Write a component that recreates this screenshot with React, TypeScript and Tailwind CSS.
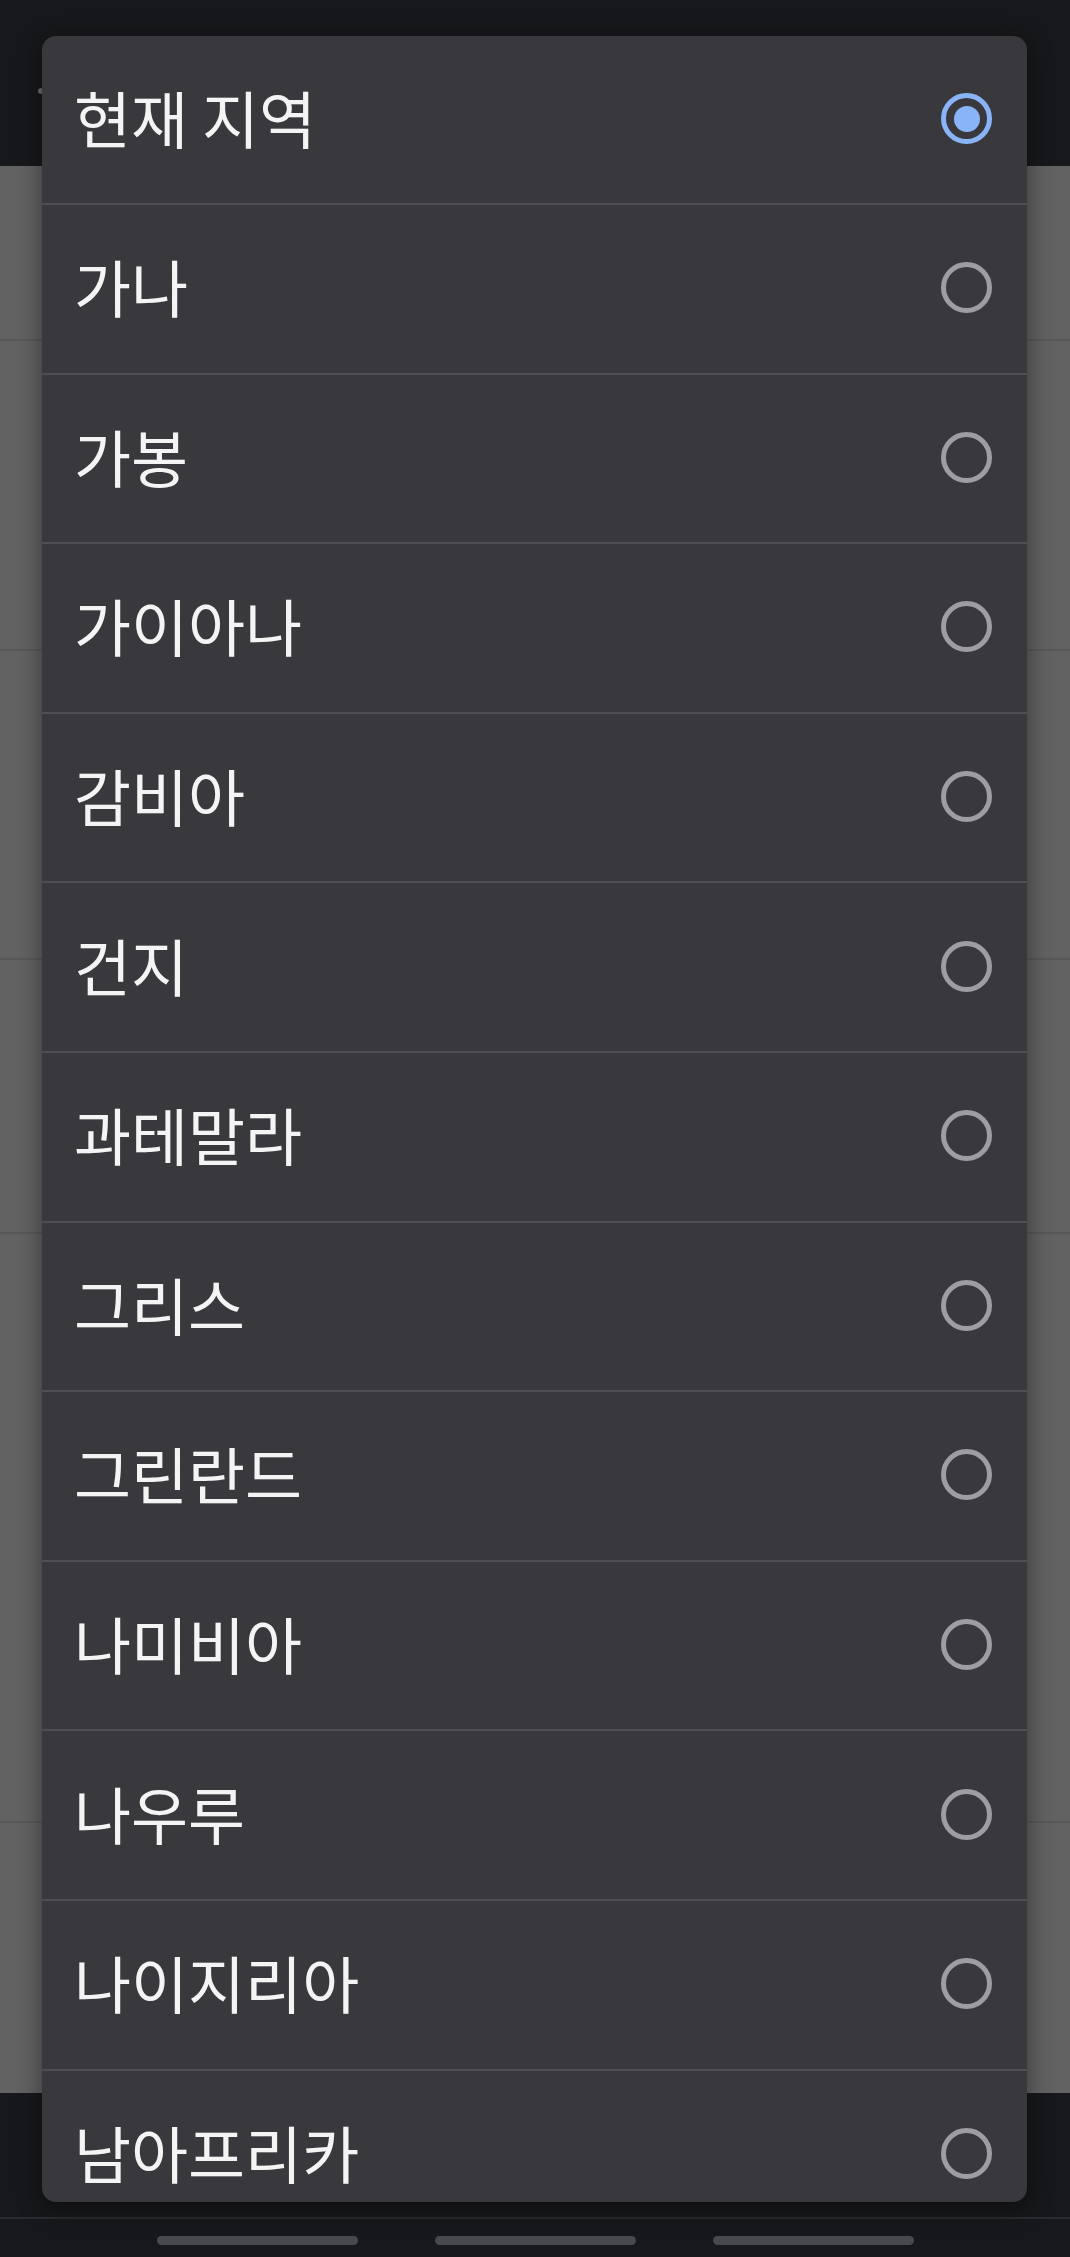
import React from "react";

const regions = [
  "현재 지역",
  "가나",
  "가봉",
  "가이아나",
  "감비아",
  "건지",
  "과테말라",
  "그리스",
  "그린란드",
  "나미비아",
  "나우루",
  "나이지리아",
  "남아프리카",
];

function Radio({ checked }: { checked: boolean }) {
  if (checked) {
    return (
      <span className="flex size-[51px] items-center justify-center rounded-full border-[5px] border-[#8ab4f8]">
        <span className="size-[26px] rounded-full bg-[#8ab4f8]" />
      </span>
    );
  }
  return <span className="size-[51px] rounded-full border-[5px] border-[#9d9ea2]" />;
}

export default function App() {
  const selected = 0;
  return (
    <div
      className="relative h-[2257px] w-[1070px] overflow-hidden bg-[#626262]"
      style={{ fontFamily: '"Noto Sans CJK KR", "Noto Sans", sans-serif' }}
    >
      {/* page behind the dimmed overlay */}
      <div className="flex h-full flex-col">
        <div className="relative h-[166px] bg-[#17181b]">
          <span className="absolute left-[38px] top-[88px] size-[6px] rounded-full bg-[#6b6b6e]" />
        </div>
        <div className="flex flex-1 flex-col">
          <div className="h-[175px] border-b-2 border-[#585858]" />
          <div className="h-[310px] border-b-2 border-[#585858]" />
          <div className="h-[309px] border-b-2 border-[#585858]" />
          <div className="h-[274px] border-b-2 border-[#585858]" />
          <div className="h-[589px] border-b-2 border-[#585858]" />
          <div className="flex-1" />
        </div>
        <div className="flex h-[164px] flex-col bg-[#17181b]">
          <div className="h-[124px]" />
          <div className="flex flex-1 items-start justify-center gap-[77px] border-t-2 border-[#2a2b2e] pt-[17px]">
            <span className="h-[9px] w-[201px] rounded-full bg-[#48494c]" />
            <span className="h-[9px] w-[201px] rounded-full bg-[#48494c]" />
            <span className="h-[9px] w-[201px] rounded-full bg-[#48494c]" />
          </div>
        </div>
      </div>

      {/* region picker dialog */}
      <div className="absolute left-[42px] top-[36px] h-[2166px] w-[985px] overflow-hidden rounded-[14px] bg-[#39383d] shadow-[0_6px_24px_rgba(0,0,0,0.45)]">
        {regions.map((name, i) => (
          <div
            key={name}
            className={
              "flex shrink-0 items-center justify-between pl-[32px] pr-[35px] " +
              (i > 0 ? "h-[169.6px] border-t-2 border-[#4f4e53]" : "h-[167px]")
            }
          >
            <span className="mb-[5px] text-[62px] leading-none text-[#f4f4f4]">{name}</span>
            <span className="mb-[2px] flex">
              <Radio checked={i === selected} />
            </span>
          </div>
        ))}
      </div>
    </div>
  );
}
